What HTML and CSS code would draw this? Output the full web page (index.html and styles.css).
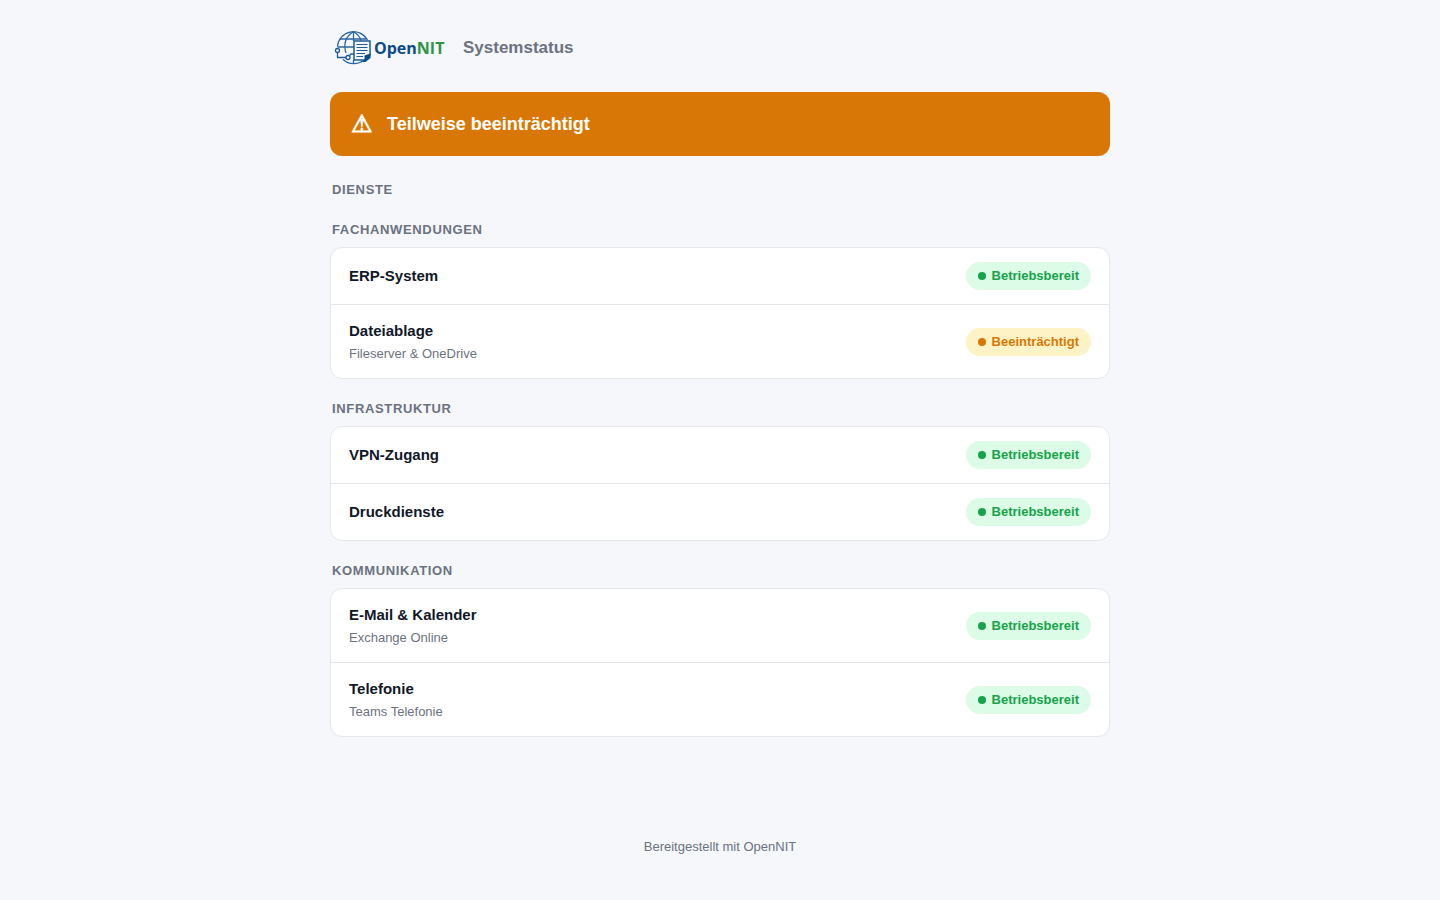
FILE: index.html
```html
<!DOCTYPE html>
<html lang="de">
<head>
  <meta charset="UTF-8">
  <meta name="viewport" content="width=device-width, initial-scale=1.0">
  <link rel="stylesheet" href="styles.css">
  <title>Systemstatus</title>
</head>
<body>
  <div class="container">
    <header class="header">
      <svg class="logo" viewBox="0 0 120 40" role="img" aria-label="OpenNIT">
        <!-- globe -->
        <g fill="none" stroke="#2a669e" stroke-width="1.3">
          <path d="M7.500 18.500A16 16 0 0 1 37.500 12M13 31.500A16 16 0 0 0 34 32"/>
          <path d="M23.500 3.500V13M23.500 3.500C15 9 13.500 17 16 25M23.500 3.500C27.500 6 30 9 31 12.500M10 11H36M7.500 19H24M23.500 35V32"/>
        </g>
        <!-- document -->
        <path d="M24 13H40V27L35 32H24Z" fill="#f5f7fb" stroke="#1d5c96" stroke-width="1.500"/>
        <path d="M40.500 25.500V30L35.500 34H32L34.500 32V27.500Z" fill="#0d4b83"/>
        <path d="M26.500 16.500H37.500M26.500 19.500H37.500M26.500 22.500H37.500M26.500 25.500H35M26.500 28.500H33" stroke="#1d5c96" stroke-width="1.200"/>
        <!-- nodes -->
        <g fill="#f5f7fb" stroke="#1d5c96" stroke-width="1.300">
          <path d="M7.500 24.500V29.500H16" fill="none"/>
          <path d="M19 28L21 26H24" fill="none"/>
          <circle cx="7.500" cy="22.500" r="2"/>
          <circle cx="18" cy="29.500" r="2"/>
        </g>
        <text class="logo-text" x="44" y="26">Open<tspan class="logo-accent">NIT</tspan></text>
      </svg>
      <h1 class="title">Systemstatus</h1>
    </header>

    <div class="banner" role="status">
      <span class="banner-icon" aria-hidden="true">⚠</span>
      <span>Teilweise beeinträchtigt</span>
    </div>

    <main>
      <h2 class="heading">Dienste</h2>

      <section class="group">
        <h3 class="heading">Fachanwendungen</h3>
        <ul class="card">
          <li class="service">
            <div class="name">ERP-System</div>
            <span class="badge ok">Betriebsbereit</span>
          </li>
          <li class="service">
            <div>
              <div class="name">Dateiablage</div>
              <div class="desc">Fileserver &amp; OneDrive</div>
            </div>
            <span class="badge degraded">Beeinträchtigt</span>
          </li>
        </ul>
      </section>

      <section class="group">
        <h3 class="heading">Infrastruktur</h3>
        <ul class="card">
          <li class="service">
            <div class="name">VPN-Zugang</div>
            <span class="badge ok">Betriebsbereit</span>
          </li>
          <li class="service">
            <div class="name">Druckdienste</div>
            <span class="badge ok">Betriebsbereit</span>
          </li>
        </ul>
      </section>

      <section class="group">
        <h3 class="heading">Kommunikation</h3>
        <ul class="card">
          <li class="service">
            <div>
              <div class="name">E-Mail &amp; Kalender</div>
              <div class="desc">Exchange Online</div>
            </div>
            <span class="badge ok">Betriebsbereit</span>
          </li>
          <li class="service">
            <div>
              <div class="name">Telefonie</div>
              <div class="desc">Teams Telefonie</div>
            </div>
            <span class="badge ok">Betriebsbereit</span>
          </li>
        </ul>
      </section>
    </main>

    <footer class="footer">Bereitgestellt mit OpenNIT</footer>
  </div>
</body>
</html>
```
FILE: styles.css
```css
* {
  box-sizing: border-box;
}
body {
  margin: 0;
  background: #f5f7fb;
  color: #111827;
  font-family: "Liberation Sans", Arial, sans-serif;
  font-size: 15px;
  line-height: 24px;
}
.container {
  max-width: 820px;
  margin: 0 auto;
  padding: 28px 20px 40px;
}
.header {
  display: flex;
  align-items: center;
  gap: 13px;
  margin-bottom: 24px;
}
.logo {
  width: 120px;
  height: 40px;
}
.logo-text {
  font-family: "Open Sans", sans-serif;
  font-size: 16px;
  font-weight: 700;
  fill: #0d4b83;
}
.logo-accent {
  fill: #2f9444;
}
.title {
  margin: 0;
  font-size: 17px;
  color: #6b7280;
}
.banner {
  display: flex;
  align-items: center;
  gap: 14px;
  padding: 20px 21px;
  border-radius: 12px;
  background: #d97706;
  color: #fff;
  font-size: 18px;
  font-weight: 700;
}
.banner-icon {
  font-size: 24px;
}
.heading {
  margin: 0;
  padding: 0 2px;
  font-size: 13px;
  line-height: 19px;
  letter-spacing: 0.05em;
  text-transform: uppercase;
  color: #6b7280;
}
main > .heading {
  margin-top: 24px;
}
.group {
  margin-top: 20px;
}
.heading + .group {
  margin-top: 21px;
}
.card {
  margin: 8px 0 0;
  padding: 0;
  list-style: none;
  background: #fff;
  border: 1px solid #e5e7eb;
  border-radius: 12px;
}
.service {
  display: flex;
  align-items: center;
  justify-content: space-between;
  gap: 16px;
  padding: 14px 18px;
}
.service + .service {
  border-top: 1px solid #e5e7eb;
}
.name {
  font-weight: 700;
}
.desc {
  font-size: 13px;
  line-height: 21px;
  color: #6b7280;
}
.badge {
  display: flex;
  align-items: center;
  gap: 6px;
  padding: 4px 12px;
  border-radius: 14px;
  font-size: 13px;
  line-height: 20px;
  font-weight: 700;
  white-space: nowrap;
}
.badge::before {
  content: "";
  width: 8px;
  height: 8px;
  border-radius: 50%;
  background: currentColor;
}
.badge.ok {
  background: #dcfce7;
  color: #16a34a;
}
.badge.degraded {
  background: #fef3c7;
  color: #d97706;
}
.footer {
  margin-top: 98px;
  text-align: center;
  font-size: 13px;
  color: #6b7280;
}
```
